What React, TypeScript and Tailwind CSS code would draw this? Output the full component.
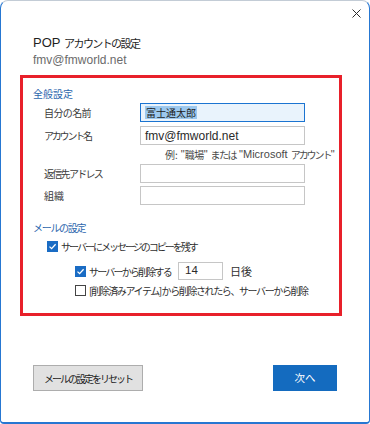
import React from 'react'

const jp = "font-['Noto_Sans_CJK_JP',sans-serif]"
const lat = "font-['Liberation_Sans','Noto_Sans_CJK_JP',sans-serif]"

const Check = ({ checked }: { checked: boolean }) => (
  checked ? (
    <span className='w-[11px] h-[11px] bg-[#1a6cc4] flex items-center justify-center shrink-0'>
      <svg width='9' height='9' viewBox='0 0 9 9'>
        <path d='M1.5 4.6 L3.6 6.6 L7.6 2.2' fill='none' stroke='white' strokeWidth='1.3' />
      </svg>
    </span>
  ) : (
    <span className='w-[11px] h-[11px] border border-[#444] bg-white shrink-0' />
  )
)

const FieldRow = ({ label, children, className = '', labelClass = '', focused = false }: { label: string, children?: React.ReactNode, className?: string, labelClass?: string, focused?: boolean }) => (
  <div className={`flex items-center ${className}`}>
    <span className={`${jp} ${labelClass} w-[117px] pl-[21px] text-[10px] text-[#3a3a3a] whitespace-nowrap`}>{label}</span>
    <div className={`w-[165px] h-[19px] border flex items-center px-[4px] ${focused ? 'border-[#1b74d1] bg-[#e9f3fc]' : 'border-[#c6c6c6] bg-white'}`}>{children}</div>
  </div>
)

export default function App() {
  return (
    <div className='w-[370px] h-[424px] bg-white border border-[#2677d2] border-t-[#c3ccd6] border-b-2 rounded-t-[8px] rounded-b-[4px] flex flex-col'>
      {/* title bar */}
      <div className='h-[25px] flex justify-end pt-[8px] pr-[8px]'>
        <svg width='9' height='9' viewBox='0 0 9 9'>
          <path d='M0.5 0.5 L8.5 8.5 M8.5 0.5 L0.5 8.5' stroke='#2b2b2b' strokeWidth='1' />
        </svg>
      </div>

      <div className='pl-[32px] mt-[8px] h-[18px] flex items-center text-[#1f1f1f]'>
        <span className={`${lat} text-[13px]`}>POP&nbsp;</span>
        <span className={`${jp} text-[11px] tracking-[-1.6px]`}>アカウントの設定</span>
      </div>
      <div className={`${lat} pl-[32px] h-[16px] leading-[16px] text-[12px] text-[#6b6b6b]`}>fmv@fmworld.net</div>

      {/* settings box */}
      <div className='ml-[19px] mt-[7px] w-[322px] h-[241px] border-[3px] border-[#e8202a] flex flex-col'>
        <div className={`${jp} pl-[10px] mt-[8px] h-[16px] leading-[16px] text-[10px] text-[#2c66ad]`}>全般設定</div>

        <FieldRow label='自分の名前' labelClass='tracking-[-0.6px]' className='mt-[1px]' focused>
          <span className={`${jp} text-[10px] text-[#222] bg-[#9cc8ee] px-[1px] leading-[13px]`}>富士通太郎</span>
        </FieldRow>
        <FieldRow label='アカウント名' labelClass='tracking-[-2.2px]' className='mt-[4px]'>
          <span className={`${lat} text-[12px] text-[#2a2a2a]`}>fmv@fmworld.net</span>
        </FieldRow>
        <div className='mt-[2px] h-[14px] pl-[142px] flex items-center text-[#4a4a4a] whitespace-nowrap'>
          <span className={`${jp} text-[10px]`}>例:</span>
          <span className={`${lat} text-[11px] ml-[3px]`}>"</span>
          <span className={`${jp} text-[10px] tracking-[-0.5px]`}>職場</span>
          <span className={`${lat} text-[11px]`}>"</span>
          <span className={`${jp} text-[10px] tracking-[-1.5px] ml-[3px]`}>または</span>
          <span className={`${lat} text-[11px] ml-[3px]`}>"Microsoft</span>
          <span className={`${jp} text-[10px] tracking-[-2px] ml-[3px]`}>アカウント</span>
          <span className={`${lat} text-[11px]`}>"</span>
        </div>
        <FieldRow label='返信先アドレス' labelClass='tracking-[-1.7px]' className='mt-[3px]' />
        <FieldRow label='組織' className='mt-[3px]' />

        <div className={`${jp} pl-[10px] mt-[15px] h-[16px] leading-[16px] text-[10px] tracking-[-1.3px] text-[#2c66ad]`}>メールの設定</div>

        <div className='mt-[1px] h-[18px] pl-[24px] flex items-center gap-[3px]'>
          <Check checked />
          <span className={`${jp} text-[10px] tracking-[-2px] text-[#2f2f2f] whitespace-nowrap`}>サーバーにメッセージのコピーを残す</span>
        </div>
        <div className='mt-[7px] h-[18px] pl-[52px] flex items-center'>
          <Check checked />
          <span className={`${jp} ml-[3px] w-[89px] text-[10px] tracking-[-1.8px] text-[#2f2f2f] whitespace-nowrap`}>サーバーから削除する</span>
          <div className='w-[45px] h-[18px] border border-[#c6c6c6] flex items-center px-[6px]'>
            <span className={`${lat} text-[11.5px] text-[#2a2a2a]`}>14</span>
          </div>
          <span className={`${jp} ml-[7px] text-[11px] text-[#2f2f2f] whitespace-nowrap`}>日後</span>
        </div>
        <div className='mt-[2px] h-[16px] pl-[52px] flex items-center gap-[3px]'>
          <Check checked={false} />
          <span className={`${jp} text-[10px] tracking-[-1.4px] text-[#2f2f2f] whitespace-nowrap`}>[削除済みアイテム] から削除されたら、サーバーから削除</span>
        </div>
      </div>

      {/* footer buttons */}
      <div className='mt-auto pb-[31px] px-[32px] flex justify-between'>
        <button className={`${jp} w-[110px] h-[26px] bg-[#e1e1e1] border border-[#adadad] text-[10px] tracking-[-2px] text-[#222]`}>メールの設定をリセット</button>
        <button className={`${jp} w-[64px] h-[26px] bg-[#146bbf] text-[10.5px] text-white`}>次へ</button>
      </div>
    </div>
  )
}
